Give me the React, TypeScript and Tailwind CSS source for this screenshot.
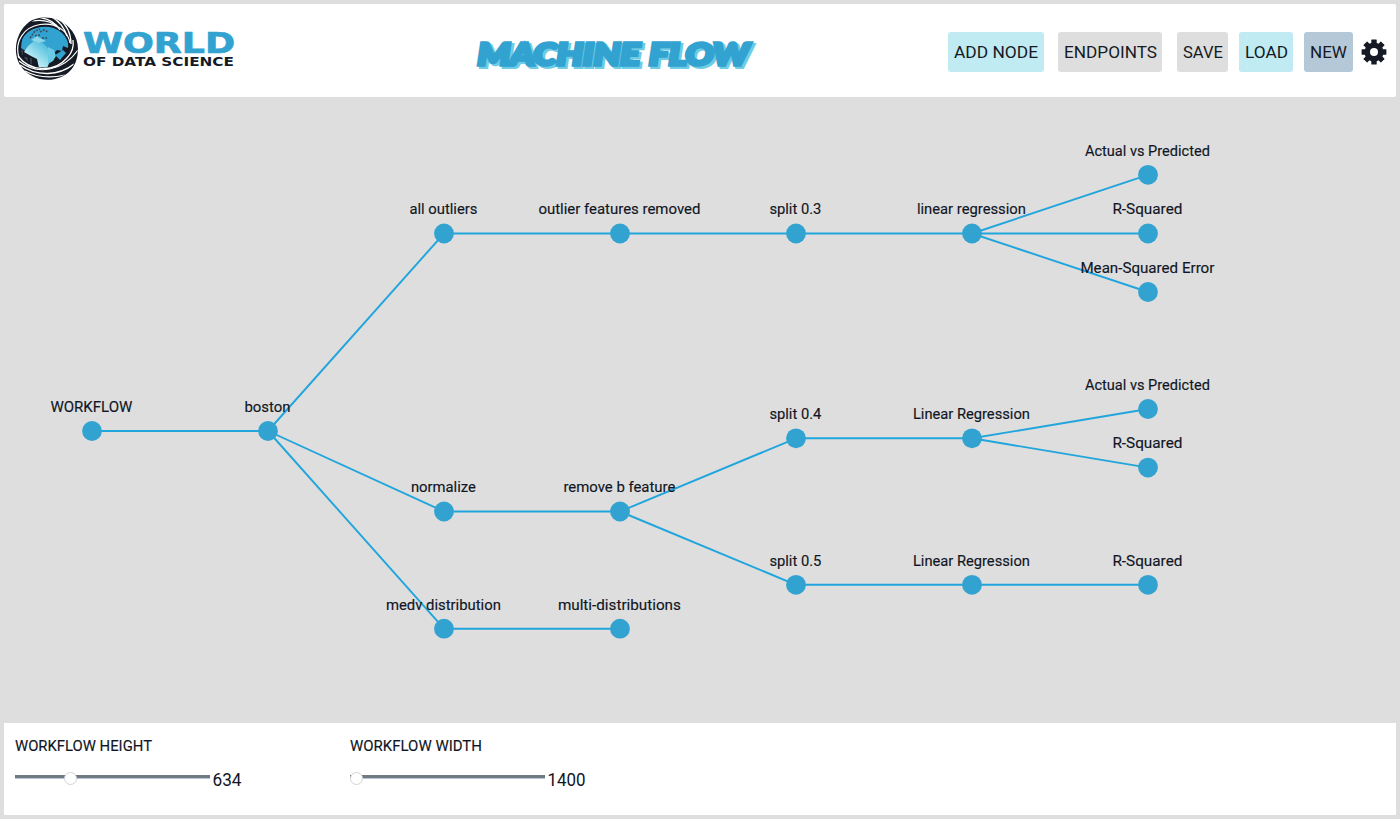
import { useState } from "react";

type FlowNode = { id: string; label: string; x: number; y: number; w: number; parent?: string };

const nodes: FlowNode[] = [
  { id: "root", label: "WORKFLOW", x: 92, y: 431, w: 82 },
  { id: "boston", label: "boston", x: 268, y: 431, w: 46, parent: "root" },
  { id: "all", label: "all outliers", x: 444, y: 233.5, w: 68, parent: "boston" },
  { id: "norm", label: "normalize", x: 444, y: 511.5, w: 65, parent: "boston" },
  { id: "medv", label: "medv distribution", x: 444, y: 628.7, w: 115, parent: "boston" },
  { id: "removed", label: "outlier features removed", x: 620, y: 233.5, w: 162, parent: "all" },
  { id: "removeb", label: "remove b feature", x: 620, y: 511.5, w: 112, parent: "norm" },
  { id: "multi", label: "multi-distributions", x: 620, y: 628.7, w: 123, parent: "medv" },
  { id: "s3", label: "split 0.3", x: 796, y: 233.5, w: 52, parent: "removed" },
  { id: "s4", label: "split 0.4", x: 796, y: 438.3, w: 52, parent: "removeb" },
  { id: "s5", label: "split 0.5", x: 796, y: 584.8, w: 52, parent: "removeb" },
  { id: "lr3", label: "linear regression", x: 972, y: 233.5, w: 109, parent: "s3" },
  { id: "lr4", label: "Linear Regression", x: 972, y: 438.3, w: 117, parent: "s4" },
  { id: "lr5", label: "Linear Regression", x: 972, y: 584.8, w: 117, parent: "s5" },
  { id: "avp3", label: "Actual vs Predicted", x: 1148, y: 174.8, w: 125, parent: "lr3" },
  { id: "r3", label: "R-Squared", x: 1148, y: 233.5, w: 70, parent: "lr3" },
  { id: "mse", label: "Mean-Squared Error", x: 1148, y: 292, w: 134, parent: "lr3" },
  { id: "avp4", label: "Actual vs Predicted", x: 1148, y: 409, w: 125, parent: "lr4" },
  { id: "r4", label: "R-Squared", x: 1148, y: 467.6, w: 70, parent: "lr4" },
  { id: "r5", label: "R-Squared", x: 1148, y: 584.8, w: 70, parent: "lr5" },
];

const byId = new Map(nodes.map((n) => [n.id, n]));

function FlowChart() {
  return (
    <svg className="block h-full w-full" viewBox="4 97 1392 625.5">
      {nodes.map((n) => {
        const p = n.parent ? byId.get(n.parent) : undefined;
        return p ? <line key={n.id} x1={p.x} y1={p.y} x2={n.x} y2={n.y} stroke="#20a5dc" strokeWidth="1.9" /> : null;
      })}
      {nodes.map((n) => (
        <g key={n.id}>
          <circle cx={n.x} cy={n.y} r="9.9" fill="#32a3d1" />
          <text x={n.x - 0.6 - n.w / 2} y={n.y - 19.2} fontSize="15.5" textLength={n.w} lengthAdjust="spacingAndGlyphs" fill="#101625" stroke="#101625" strokeWidth="0.15">
            {n.label}
          </text>
        </g>
      ))}
    </svg>
  );
}

function Logo() {
  return (
    <svg className="block h-[68px] w-[224px]" viewBox="13 14 224 68">
      <defs>
        <clipPath id="ball"><circle cx="46.5" cy="49" r="31.3" /></clipPath>
        <clipPath id="globe"><ellipse cx="44.5" cy="47" rx="24" ry="20.5" /></clipPath>
        <linearGradient id="land" x1="0" y1="1" x2="1" y2="0">
          <stop offset="0.3" stopColor="#bcebf4" />
          <stop offset="0.65" stopColor="#6ccbe4" />
          <stop offset="1" stopColor="#32a3d1" />
        </linearGradient>
      </defs>
      <path d="M29 22C36 17 48 16 58 20C70 25 78 36 78 49C78 65 69 76 55 79C42 82 28 77 20 65C12 52 16 32 29 22Z" fill="#151a25" />
      <g clipPath="url(#globe)">
        <rect x="20" y="24" width="50" height="46" fill="#151a25" />
        <path d="M21 48L22 38L29 30L40 27L52 26L63 32L69 42L68 48L63 46L62 51L57 50L54 53L49 49L42 45L33 45L27 52Z" fill="#32a3d1" />
        <path d="M28 46L34 41L43 43L48 48L55 53L51 59L47 68L39 68L37 59L31 56L24 52Z" fill="url(#land)" />
        <path d="M48 47L54 50L56 56L53 61L48 64Z" fill="#6ccbe4" />
        <path d="M30 38L35 31L40 29M40 32L44 30L48 32M35 36L40 35M42 38L48 38" fill="none" stroke="#3a4c5e" strokeWidth="1.6" strokeDasharray="2 1.2" />
        <path d="M31 40L37 36L40 38L46 41L39 43Z" fill="#8bd6e9" />
        <path d="M55 55L63 50L66 53L60 60Z" fill="#32a3d1" />
        <path d="M22 50v8h5v6M31 58v7" fill="none" stroke="#667783" strokeWidth="0.8" />
      </g>
      <g clipPath="url(#ball)" fill="none" stroke="white">
        <path d="M19 58C14 41 24 27 40 24.5C56 22 68 31 70 43" strokeWidth="1.2" />
        <path d="M40 17.5C50 19 56 23 60 30M50 16C58 20 64 27 67 36M59 19C67 25 71 32 71 44" strokeWidth="1.3" />
        <path d="M32 21C44 19 52 22 57 27" strokeWidth="1.2" />
        <path d="M18 56C30 72 54 73 67 58C72 53 74 47 73 40" strokeWidth="1.3" />
        <path d="M19 61C37 76 63 71 78 50" strokeWidth="1.1" />
        <path d="M20 65C37 77 59 76 74 64" strokeWidth="1.5" />
        <path d="M25 71C38 78 52 78 65 75" strokeWidth="1.2" />
      </g>
      <g fontFamily="'DejaVu Sans', sans-serif" fontWeight="700">
        <text x="83" y="53" fontSize="27.5" textLength="152" lengthAdjust="spacingAndGlyphs" fill="#32a3d1" stroke="#32a3d1" strokeWidth="0.7">WORLD</text>
        <text x="83" y="65.6" fontSize="12" textLength="151" lengthAdjust="spacingAndGlyphs" fill="#151a25">OF DATA SCIENCE</text>
      </g>
    </svg>
  );
}

const words = [
  { text: "MACHINE", x: 477.6, w: 162.5 },
  { text: "FLOW", x: 649, w: 100 },
];

function Title() {
  return (
    <svg className="block h-10 w-[286px]" viewBox="471 34 286 40" fontFamily="'Lato', sans-serif" fontWeight="900" fontSize="31" fontStyle="italic" strokeLinejoin="miter">
      <g fill="#6fcce4" stroke="#6fcce4" strokeWidth="3.8" aria-hidden="true">
        {words.map((t) => (
          <text key={t.text} x={t.x + 2.3} y="66.9" textLength={t.w} lengthAdjust="spacingAndGlyphs">{t.text}</text>
        ))}
      </g>
      <g fill="#32a3d1" stroke="#32a3d1" strokeWidth="3.5">
        {words.map((t) => (
          <text key={t.text} x={t.x} y="65" textLength={t.w} lengthAdjust="spacingAndGlyphs">{t.text}</text>
        ))}
      </g>
    </svg>
  );
}

function Gear() {
  return (
    <svg className="block size-[26px]" viewBox="-13 -13 26 26">
      <g fill="#151a25">
        {[0, 45, 90, 135].map((a) => (
          <rect key={a} x="-2.7" y="-12.4" width="5.4" height="24.8" rx="0.5" transform={`rotate(${a})`} />
        ))}
        <circle r="9.5" />
      </g>
      <circle r="4" fill="white" />
    </svg>
  );
}

const buttons = [
  { label: "ADD NODE", box: "w-24 bg-[#c0ebf2] mr-3.5", w: 84 },
  { label: "ENDPOINTS", box: "w-[104px] bg-[#dedede] mr-[15px]", w: 93 },
  { label: "SAVE", box: "w-[51px] bg-[#dedede] mr-[11px]", w: 40 },
  { label: "LOAD", box: "w-[54px] bg-[#c0ebf2] mr-[11px]", w: 43 },
  { label: "NEW", box: "w-[49px] bg-[#b5c8d8] mr-[7.5px]", w: 37 },
];

type RangeProps = { label: string; labelW: number; min: number; max: number; start: number; valueW: number };

function Range({ label, labelW, min, max, start, valueW }: RangeProps) {
  const [value, setValue] = useState(start);
  return (
    <div className="w-[335px]">
      <svg className="block h-6 w-[200px]" role="img" aria-label={label}>
        <text x="0" y="17.9" fontSize="15.5" textLength={labelW} lengthAdjust="spacingAndGlyphs" fill="#101625" stroke="#101625" strokeWidth="0.15">{label}</text>
      </svg>
      <div className="mt-[9px] flex items-center">
        <input
          type="range"
          min={min}
          max={max}
          value={value}
          onChange={(e) => setValue(Number(e.target.value))}
          className="h-3 w-[195px] appearance-none bg-[linear-gradient(#707a82_75%,#b8c6da_75%)] bg-[length:100%_4px] bg-[position:0_3px] bg-no-repeat [&::-webkit-slider-thumb]:size-[13px] [&::-webkit-slider-thumb]:appearance-none [&::-webkit-slider-thumb]:rounded-full [&::-webkit-slider-thumb]:border [&::-webkit-slider-thumb]:border-[#d4d4d4] [&::-webkit-slider-thumb]:bg-white"
        />
        <svg className="ml-0.5 block h-6 w-[60px]">
          <text x="0.5" y="20" fontSize="18" textLength={valueW} lengthAdjust="spacingAndGlyphs" fill="#101625">{value}</text>
        </svg>
      </div>
    </div>
  );
}

export default function App() {
  return (
    <div className="flex h-[819px] w-[1400px] flex-col bg-[#dedede] p-1 font-['Roboto',sans-serif] text-[#151a25]">
      <header className="flex h-[93px] items-start rounded-xs bg-white pr-[9.5px]">
        <div className="pt-2.5 pl-[9px]"><Logo /></div>
        <h1 className="pt-[30px] pl-[234px]"><Title /></h1>
        <div className="ml-auto flex items-center pt-7">
          {buttons.map((b) => (
            <button key={b.label} className={`flex h-10 items-center justify-center rounded-[3px] ${b.box}`}>
              <svg className="block h-6" width={b.w} aria-hidden="true">
                <text x="0" y="17.8" fontSize="17" textLength={b.w} lengthAdjust="spacingAndGlyphs" fill="#151a25">{b.label}</text>
              </svg>
            </button>
          ))}
          <button aria-label="Settings"><Gear /></button>
        </div>
      </header>
      <main className="min-h-0 flex-1"><FlowChart /></main>
      <footer className="flex h-[92.5px] items-start bg-white pt-[10.5px] pl-[11px]">
        <Range label="WORKFLOW HEIGHT" labelW={137} min={200} max={1800} start={634} valueW={29} />
        <Range label="WORKFLOW WIDTH" labelW={132} min={1400} max={4000} start={1400} valueW={38} />
      </footer>
    </div>
  );
}
